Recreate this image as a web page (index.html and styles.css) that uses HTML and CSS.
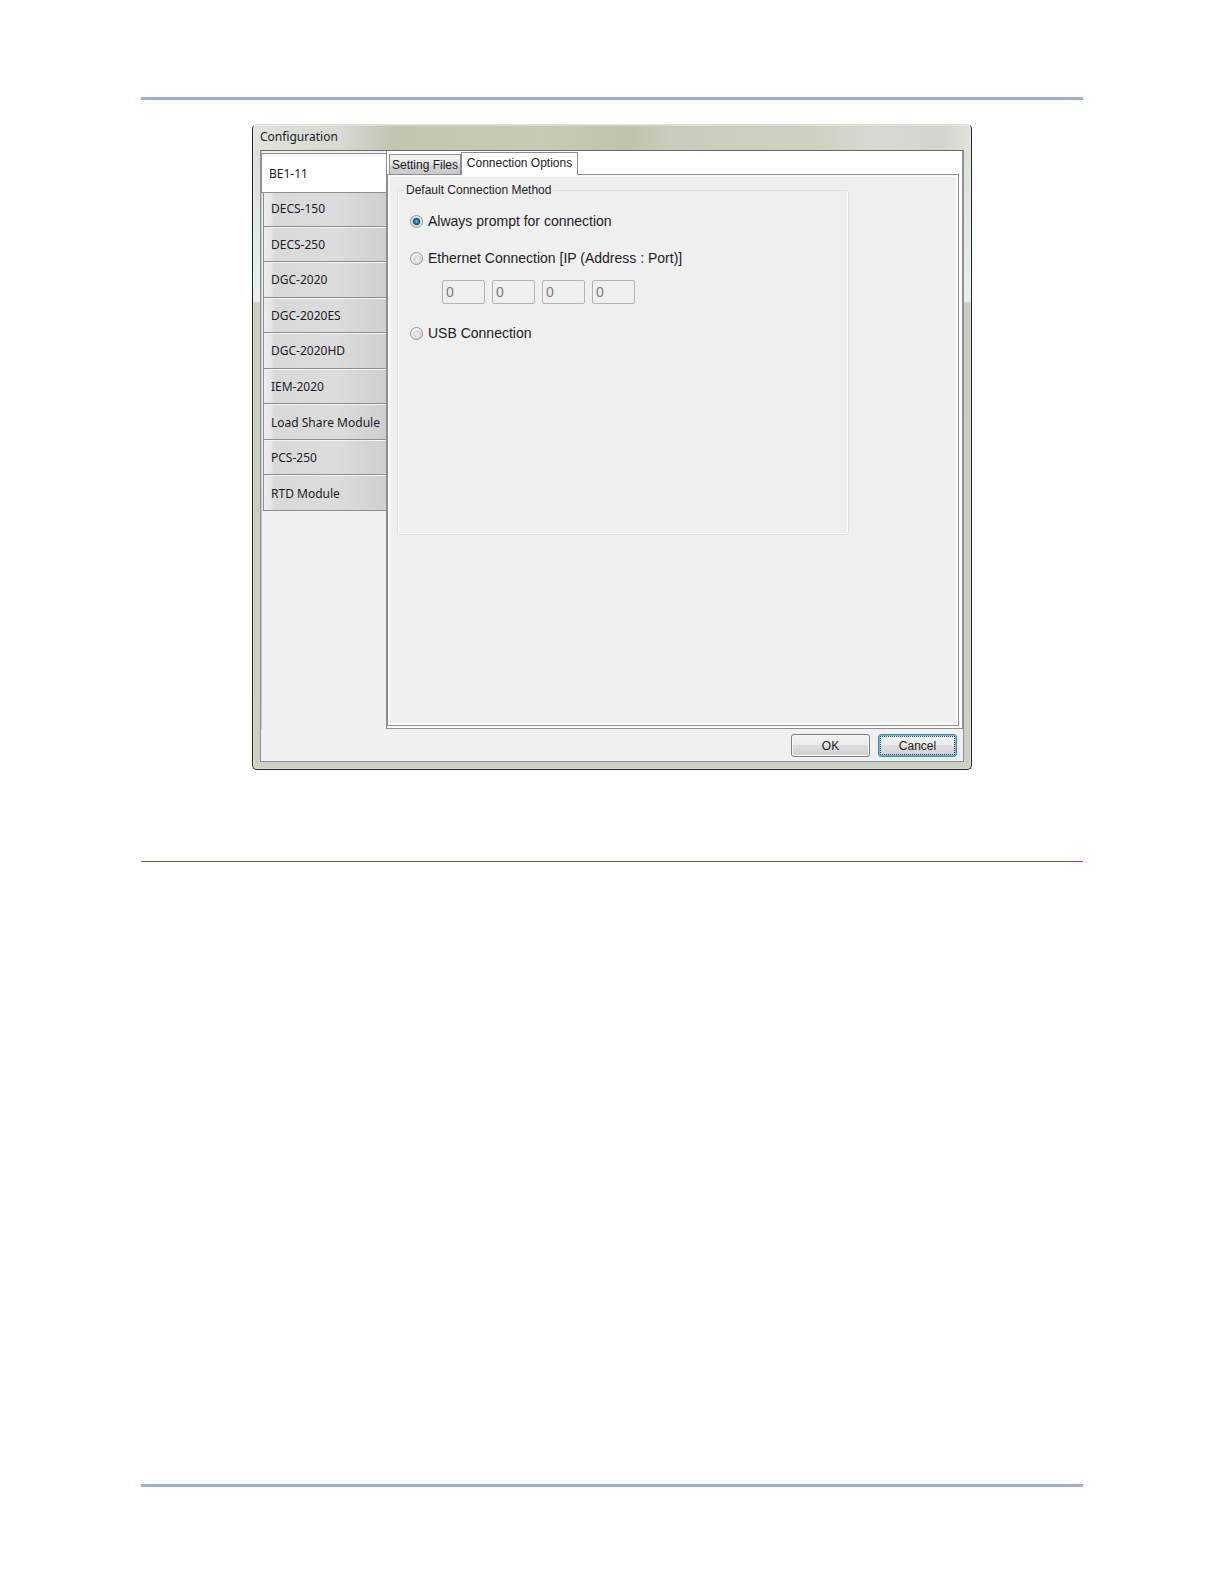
FILE: index.html
```html
<!DOCTYPE html>
<html lang="en">
<head>
<meta charset="utf-8">
<meta name="viewport" content="width=device-width, initial-scale=1">
<title>Configuration</title>
<link rel="stylesheet" href="styles.css">
</head>
<body>
<div class="sheet">
  <hr class="rule">
  <main class="window">
    <h1 class="window-title">Configuration</h1>
    <form class="client">
      <nav class="devices" aria-label="Devices">
        <button type="button" class="device device-current">BE1-11</button>
        <div class="device-list">
          <button type="button" class="device">DECS-150</button>
          <button type="button" class="device">DECS-250</button>
          <button type="button" class="device">DGC-2020</button>
          <button type="button" class="device">DGC-2020ES</button>
          <button type="button" class="device">DGC-2020HD</button>
          <button type="button" class="device">IEM-2020</button>
          <button type="button" class="device">Load Share Module</button>
          <button type="button" class="device">PCS-250</button>
          <button type="button" class="device">RTD Module</button>
        </div>
      </nav>
      <section class="panel">
        <div class="tabs" role="tablist">
          <button type="button" class="tab" role="tab" aria-selected="false">Setting Files</button>
          <button type="button" class="tab tab-current" role="tab" aria-selected="true">Connection Options</button>
        </div>
        <div class="tab-page" role="tabpanel">
          <fieldset class="group">
            <legend>Default Connection Method</legend>
            <div class="option">
              <input type="radio" class="radio" name="method" id="prompt" checked>
              <label for="prompt">Always prompt for connection</label>
            </div>
            <div class="option">
              <input type="radio" class="radio" name="method" id="ethernet">
              <label for="ethernet">Ethernet Connection [IP (Address : Port)]</label>
            </div>
            <div class="address">
              <input type="text" value="0" aria-label="Address part 1" disabled>
              <input type="text" value="0" aria-label="Address part 2" disabled>
              <input type="text" value="0" aria-label="Address part 3" disabled>
              <input type="text" value="0" aria-label="Address part 4" disabled>
            </div>
            <div class="option">
              <input type="radio" class="radio" name="method" id="usb">
              <label for="usb">USB Connection</label>
            </div>
          </fieldset>
        </div>
      </section>
      <div class="actions">
        <button type="button" class="action">OK</button>
        <button type="button" class="action action-focus">Cancel</button>
      </div>
    </form>
  </main>
  <hr class="rule rule-thin">
  <hr class="rule rule-bottom">
</div>
</body>
</html>
```
FILE: styles.css
```css
* {
  box-sizing: border-box;
}

body {
  margin: 0;
  background: #fff;
  color: #1c1c24;
  font: 12px/16px "Liberation Sans", Arial, sans-serif;
}

button,
input {
  margin: 0;
  font: inherit;
  color: inherit;
}

.sheet {
  display: flex;
  flex-direction: column;
  min-height: 100vh;
  padding: 97px 141px;
}

.rule {
  width: 100%;
  height: 3px;
  margin: 0;
  border: 0;
  background: #9cb1d5;
}

.rule-thin {
  height: 1px;
  margin-top: 91px;
  background: #2474a6;
}

.rule-bottom {
  margin-top: auto;
}

/* Window frame */
.window {
  width: 100%;
  max-width: 720px;
  margin: 24px auto 0;
  padding: 0 7px 7px;
  border: 1px solid #24272a;
  border-top-color: #dfe2db;
  border-radius: 5px;
  background:
    linear-gradient(90deg, #dfe5dd 0, #d6dacf 90px, #bfc6b2 140px, #c6cbb8 290px, #bcc3ae 375px, #c8cebd 420px, #ccd3c0 560px, #d6dad2 620px, #d0d5cd 690px, #dfe3dd 100%) 0 0 / 100% 25px no-repeat,
    linear-gradient(180deg, #d8dfd3 0, #e9efee 176px, #c9cfbe 178px, #cdd1c4 100%);
  box-shadow: inset 0 0 0 1px rgba(255, 255, 255, 0.3);
}

.window-title {
  margin: 0;
  padding: 4px 0 5px;
  font: 12px/16px "Noto Sans", sans-serif;
}

.client {
  display: grid;
  grid-template-columns: 125px 1fr;
  border: 1px solid #8d9292;
  border-top-color: #65696a;
  background: #f0f0f0;
}

/* Device list */
.devices {
  padding-top: 2px;
  font: 12px/16px "Noto Sans", sans-serif;
  box-shadow: inset 1px 0 #c4c7c7;
}

.device {
  display: block;
  width: 100%;
  padding: 2px 0 0 7px;
  border: 1px solid #8c8e94;
  border-top: 0;
  border-right: 0;
  background: linear-gradient(90deg, #eeeeef 0, #e6e6e7 7px, #d9d9da 11px, #dcdcdd 60%, #cfcfd0 100%);
  box-shadow: inset 0 1px #f4f4f4;
  text-align: left;
  white-space: nowrap;
}

.device-current {
  position: relative;
  height: 40px;
  border-top: 1px solid #8c8e94;
  background: #fff;
}

.device-list {
  display: grid;
  grid-template-rows: repeat(9, 1fr);
  height: 320px;
  margin: -2px 0 0 2px;
}

/* Tabbed panel */
.panel {
  display: flex;
  flex-direction: column;
  min-height: 578px;
  padding: 0 3px 2px 0;
  border: 1px solid #8c8e94;
  border-top: 0;
  background: #fff;
}

.tabs {
  display: flex;
  align-items: flex-end;
  height: 23px;
  padding-left: 2px;
}

.tab {
  height: 20px;
  padding: 0;
  width: 72px;
  border: 1px solid #8c8e94;
  border-bottom: 0;
  background: linear-gradient(#f2f2f2, #e6e6e6 50%, #d2d2d2 50%, #cacaca);
  white-space: nowrap;
}

.tab-current {
  position: relative;
  width: 117px;
  height: 23px;
  margin-bottom: -1px;
  padding: 0 0 2px;
  background: #fff;
}

.tab-page {
  flex: 1;
  padding: 7px 9px;
  border: 1px solid #8c8e94;
  background: #efefef;
  box-shadow: inset 0 0 0 2px #fbfbfb;
}

.group {
  max-width: 452px;
  min-width: 0;
  min-height: 353px;
  margin: 0;
  padding: 13px 12px;
  border: 1px solid #dcdfe0;
  border-radius: 3px;
  box-shadow: inset 0 -1px #fff, inset -1px 0 #fff, inset 1px 0 #fff;
}

.group legend {
  margin-left: -6px;
  padding: 0 2px;
}

.option {
  display: flex;
  align-items: center;
  gap: 5px;
  margin-bottom: 17px;
  font-size: 14px;
  line-height: 20px;
}

.radio {
  appearance: none;
  width: 13px;
  height: 13px;
  border: 1px solid #8e8f8f;
  border-radius: 50%;
  background: radial-gradient(circle at 60% 60%, #f4f4f4 0, #d2d4d6 4px, #f4f4f4 5px);
}

.radio:checked {
  background: radial-gradient(circle, #6cc0e2 0, #2a7fa6 2px, #123f5c 3px, #c5d2da 4px, #e8ecee 5px);
}

.address {
  display: flex;
  gap: 7px;
  margin: -5px 0 19px 32px;
}

.address input {
  width: 43px;
  height: 24px;
  padding: 0 3px;
  border: 1px solid #b1b3b5;
  border-radius: 2px;
  background: #efefef;
  color: #7b7b7b;
  font-size: 14px;
}

/* Dialog buttons */
.actions {
  display: flex;
  grid-column: 1 / -1;
  justify-content: flex-end;
  gap: 8px;
  padding: 5px 6px 4px;
}

.action {
  width: 79px;
  height: 23px;
  padding: 0;
  border: 1px solid #808080;
  border-radius: 3px;
  background: linear-gradient(#f3f3f3, #ebebeb 50%, #dddddd 50%, #d0d0d0);
  box-shadow: inset 0 0 0 1px #f8f8f8;
}

.action-focus {
  border-color: #3c8fb5;
  box-shadow: inset 0 0 0 1px #5cbce0;
  outline: 1px dotted #24425a;
  outline-offset: -3px;
}
```
